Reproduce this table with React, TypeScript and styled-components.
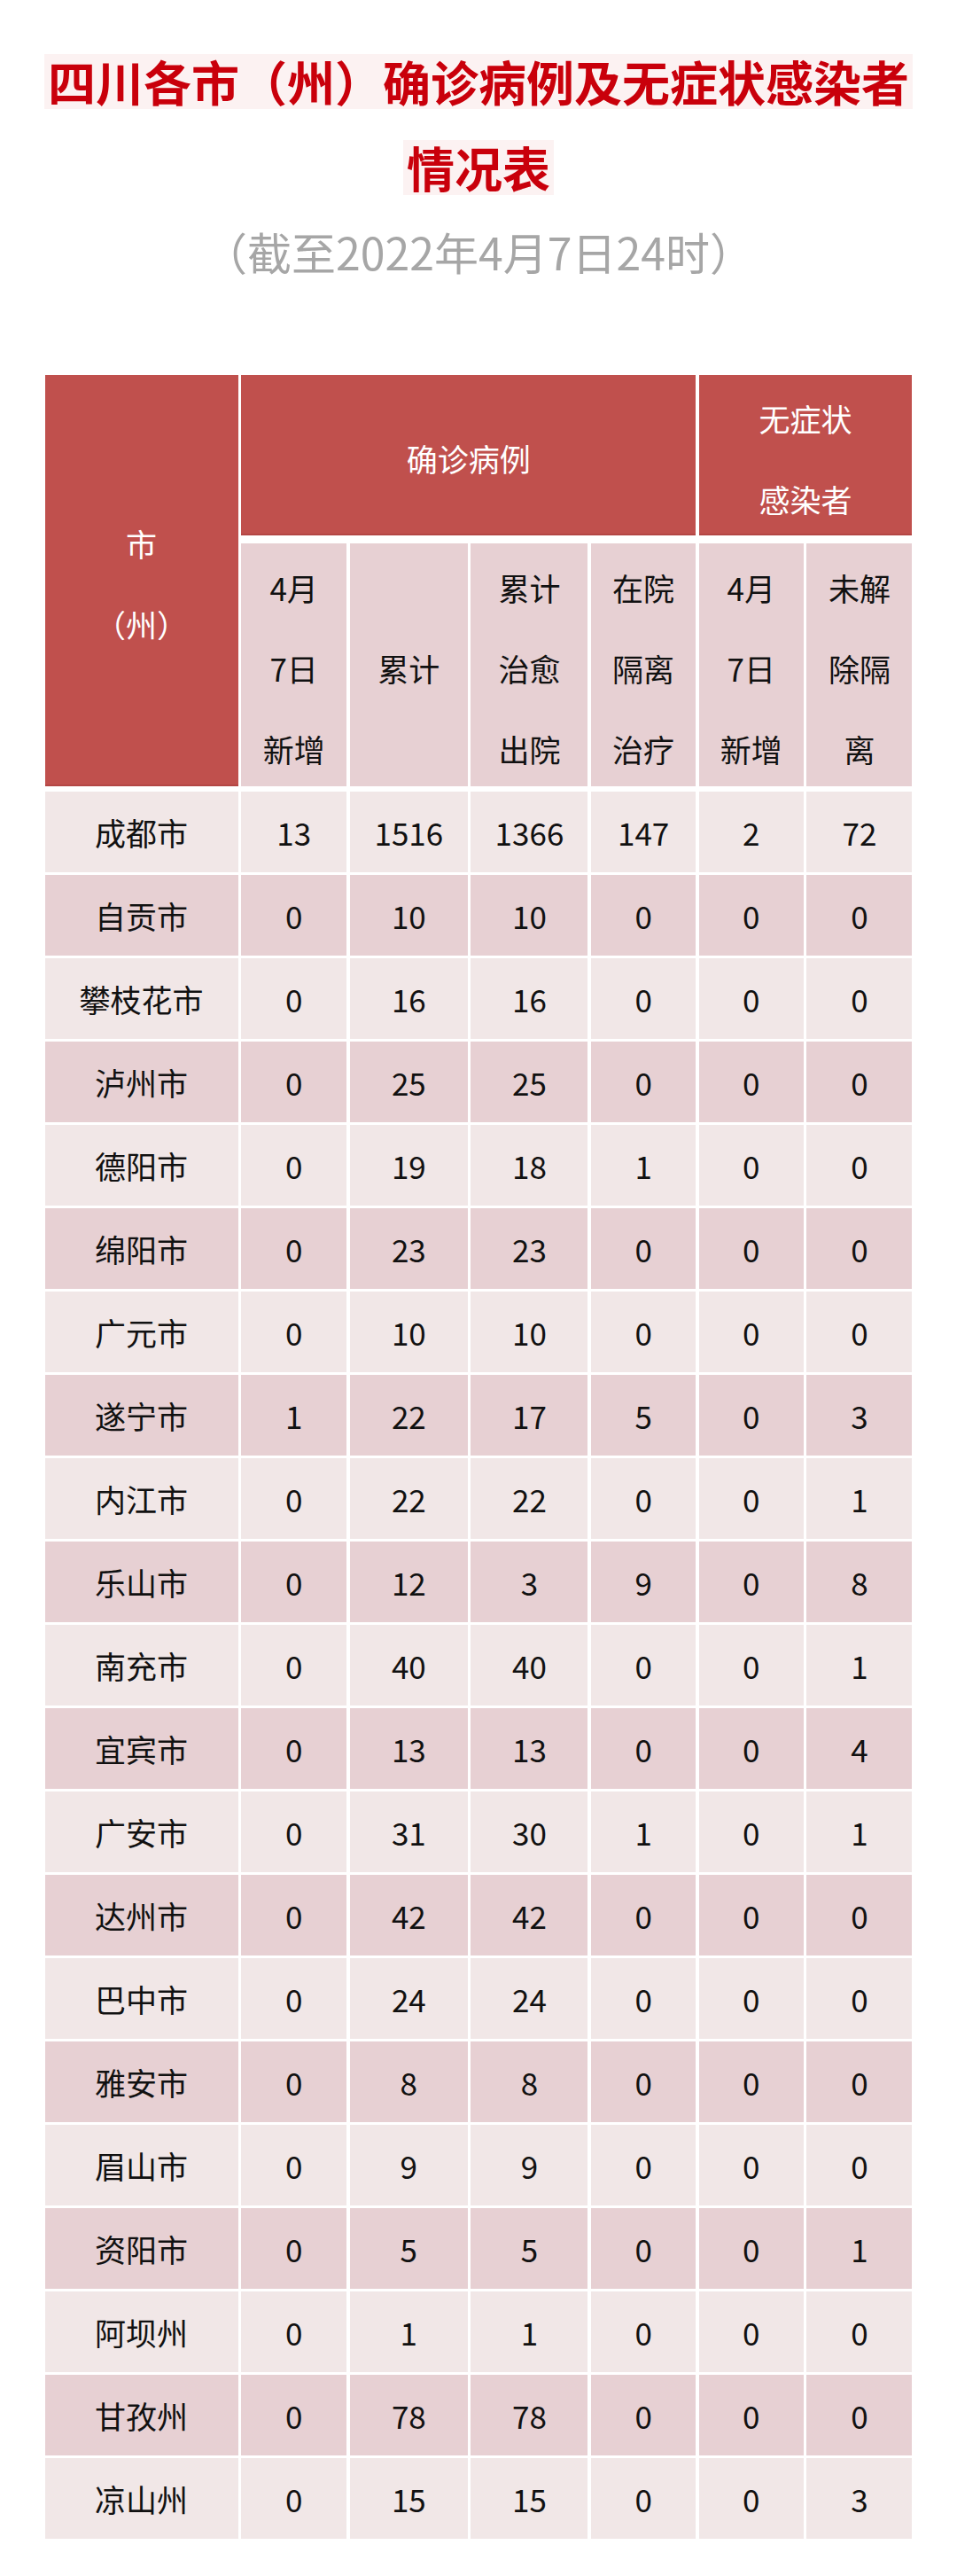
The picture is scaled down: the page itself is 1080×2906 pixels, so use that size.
import React from "react";
import styled, { createGlobalStyle } from "styled-components";

const GlobalStyle = createGlobalStyle`
  html, body {
    margin: 0;
    padding: 0;
    background: #ffffff;
  }
  body {
    font-family: "Noto Sans CJK SC", "Noto Sans", sans-serif;
  }
`;

const Page = styled.div`
  width: 1080px;
  min-height: 2906px;
  background: #ffffff;
  padding-top: 61px;
  box-sizing: border-box;
`;

const TitleBlock = styled.div`
  display: flex;
  flex-direction: column;
  align-items: center;
  gap: 35px;
`;

const TitleLine = styled.span`
  display: inline-block;
  height: 62px;
  line-height: 62px;
  padding: 0 4px;
  background: #fcf2f2;
  color: #c9000b;
  font-size: 54px;
  font-weight: 700;
  white-space: nowrap;
`;

const Subtitle = styled.div`
  margin-top: 33px;
  height: 60px;
  line-height: 60px;
  text-align: center;
  color: #a6a6a6;
  font-size: 50px;
  font-weight: 400;
  white-space: nowrap;
`;

const Table = styled.div`
  width: 979px;
  margin: 110px auto 0;
  display: flex;
  flex-direction: column;
`;

const cols = "218px 119px 133px 132px 118px 118px 119px";

const HeaderGrid = styled.div`
  display: grid;
  grid-template-columns: ${cols};
  grid-template-rows: 181px 274px;
  column-gap: 3.67px;
  row-gap: 9px;
`;

const HeadCell = styled.div<{ $col: string; $row: string }>`
  grid-column: ${(p) => p.$col};
  grid-row: ${(p) => p.$row};
  background: #c0504d;
  color: #ffffff;
  font-size: 35px;
  line-height: 91px;
  display: flex;
  flex-direction: column;
  align-items: center;
  justify-content: center;
  padding-top: 6px;
  box-sizing: border-box;
  box-shadow: inset 0 -2px 0 rgba(120, 30, 30, 0.18);
`;

const SubHeadCell = styled.div`
  background: #e7d0d3;
  color: #111111;
  font-size: 35px;
  line-height: 91px;
  display: flex;
  flex-direction: column;
  align-items: center;
  justify-content: center;
  padding-top: 6px;
  box-sizing: border-box;
`;

const Line = styled.span`
  display: block;
  white-space: nowrap;
`;

const Body = styled.div`
  margin-top: 6px;
  display: flex;
  flex-direction: column;
  gap: 3.5px;
`;

const Row = styled.div<{ $dark: boolean }>`
  display: grid;
  grid-template-columns: ${cols};
  column-gap: 3.67px;
  height: 90.5px;
  & > div {
    background: ${(p) => (p.$dark ? "#e7d0d3" : "#f1e7e7")};
  }
`;

const Cell = styled.div`
  display: flex;
  align-items: center;
  justify-content: center;
  color: #111111;
  font-size: 35px;
  line-height: 1;
  white-space: nowrap;
`;

type RowData = [string, number, number, number, number, number, number];

const rows: RowData[] = [
  ["成都市", 13, 1516, 1366, 147, 2, 72],
  ["自贡市", 0, 10, 10, 0, 0, 0],
  ["攀枝花市", 0, 16, 16, 0, 0, 0],
  ["泸州市", 0, 25, 25, 0, 0, 0],
  ["德阳市", 0, 19, 18, 1, 0, 0],
  ["绵阳市", 0, 23, 23, 0, 0, 0],
  ["广元市", 0, 10, 10, 0, 0, 0],
  ["遂宁市", 1, 22, 17, 5, 0, 3],
  ["内江市", 0, 22, 22, 0, 0, 1],
  ["乐山市", 0, 12, 3, 9, 0, 8],
  ["南充市", 0, 40, 40, 0, 0, 1],
  ["宜宾市", 0, 13, 13, 0, 0, 4],
  ["广安市", 0, 31, 30, 1, 0, 1],
  ["达州市", 0, 42, 42, 0, 0, 0],
  ["巴中市", 0, 24, 24, 0, 0, 0],
  ["雅安市", 0, 8, 8, 0, 0, 0],
  ["眉山市", 0, 9, 9, 0, 0, 0],
  ["资阳市", 0, 5, 5, 0, 0, 1],
  ["阿坝州", 0, 1, 1, 0, 0, 0],
  ["甘孜州", 0, 78, 78, 0, 0, 0],
  ["凉山州", 0, 15, 15, 0, 0, 3],
];

const subHeads: string[][] = [
  ["4月", "7日", "新增"],
  ["累计"],
  ["累计", "治愈", "出院"],
  ["在院", "隔离", "治疗"],
  ["4月", "7日", "新增"],
  ["未解", "除隔", "离"],
];

export default function App() {
  return (
    <>
      <GlobalStyle />
      <Page>
        <TitleBlock>
          <TitleLine>四川各市（州）确诊病例及无症状感染者</TitleLine>
          <TitleLine>情况表</TitleLine>
        </TitleBlock>
        <Subtitle>（截至2022年4月7日24时）</Subtitle>
        <Table>
          <HeaderGrid>
            <HeadCell $col="1" $row="1 / span 2">
              <Line>市</Line>
              <Line>（州）</Line>
            </HeadCell>
            <HeadCell $col="2 / span 4" $row="1">
              <Line>确诊病例</Line>
            </HeadCell>
            <HeadCell $col="6 / span 2" $row="1">
              <Line>无症状</Line>
              <Line>感染者</Line>
            </HeadCell>
            {subHeads.map((lines, i) => (
              <SubHeadCell key={i}>
                {lines.map((l, j) => (
                  <Line key={j}>{l}</Line>
                ))}
              </SubHeadCell>
            ))}
          </HeaderGrid>
          <Body>
            {rows.map((r, i) => (
              <Row key={r[0]} $dark={i % 2 === 1}>
                {r.map((v, j) => (
                  <Cell key={j}>{v}</Cell>
                ))}
              </Row>
            ))}
          </Body>
        </Table>
      </Page>
    </>
  );
}
